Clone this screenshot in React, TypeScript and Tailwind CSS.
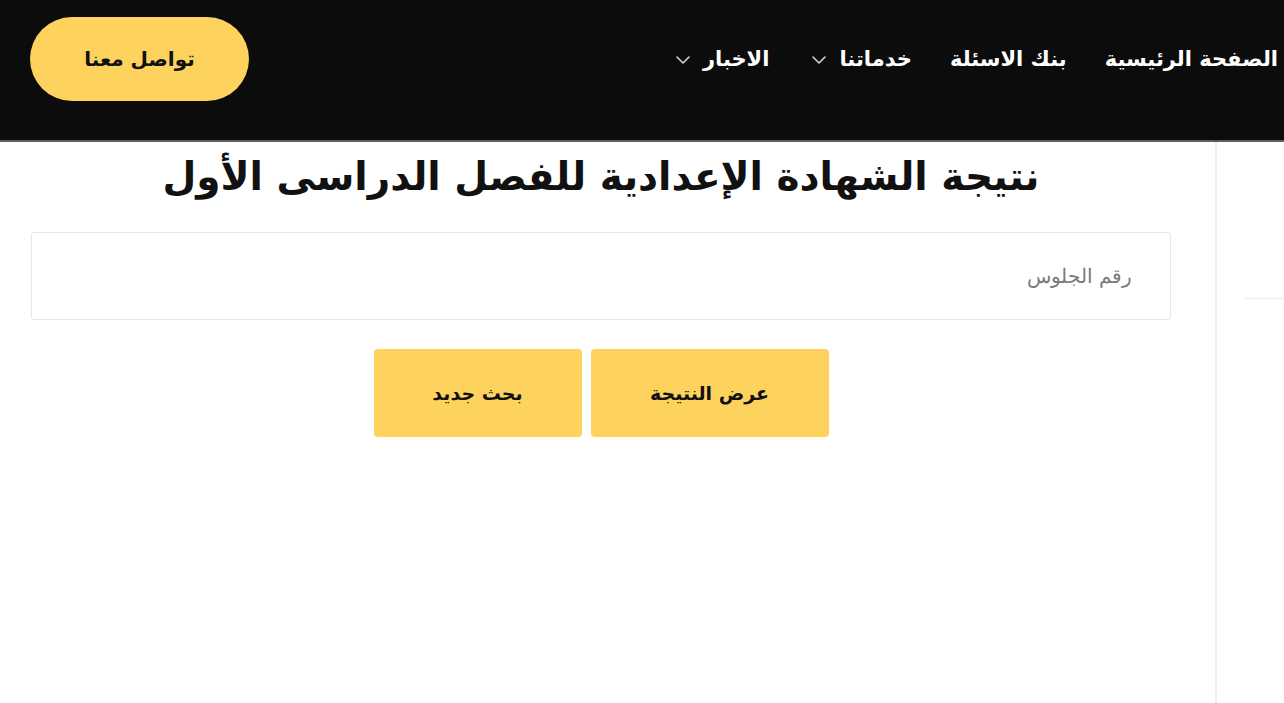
import { ChevronDown } from 'lucide-react';

const navItems = [
  { label: 'الصفحة الرئيسية', dropdown: false },
  { label: 'بنك الاسئلة', dropdown: false },
  { label: 'خدماتنا', dropdown: true },
  { label: 'الاخبار', dropdown: true },
];

export default function App() {
  return (
    <div dir="rtl" className="min-h-[703px] bg-white font-['DejaVu_Sans',sans-serif] text-[#111]">
      {/* Header */}
      <header className="h-[142px] bg-[#0c0c0c] border-b-2 border-[#5f5f5f] flex items-center justify-between pr-[6px] pl-[30px]">
        <nav className="flex items-center gap-[38px] -mt-[20px]">
          {navItems.map((item) => (
            <a key={item.label} href="#" className="flex items-center gap-[8px] text-[21px] font-bold text-white">
              <span>{item.label}</span>
              {item.dropdown && <ChevronDown className="w-[24px] h-[24px] text-[#d4d4d4]" strokeWidth={1.6} />}
            </a>
          ))}
        </nav>
        <button className="w-[219px] h-[84px] -mt-[22px] rounded-full bg-[#fdd35d] text-[20px] font-bold text-[#111]">
          تواصل معنا
        </button>
      </header>

      {/* Body */}
      <div className="flex min-h-[561px]">
        <aside className="w-[69px] shrink-0 border-l-2 border-[#ececec]">
          <div className="mt-[156px] h-px w-[40px] bg-[#eeeeee] ml-0" />
        </aside>
        <main className="flex-1 pt-[8px]">
          <div className="w-[1140px] mr-[44px]">
            <h1 className="text-center text-[39px] font-bold leading-[54px] text-[#111]">
              نتيجة الشهادة الإعدادية للفصل الدراسى الأول
            </h1>
            <input
              type="text"
              placeholder="رقم الجلوس"
              className="mt-[28px] block w-full h-[88px] rounded-[3px] border border-[#e6e6e6] bg-white px-[38px] text-[20px] font-light text-[#333] placeholder:text-[#7a7a7a] outline-none"
            />
            <div className="mt-[29px] flex justify-center gap-[9px]">
              <button className="w-[238px] h-[88px] rounded-[4px] bg-[#fdd35d] text-[19px] font-bold text-[#111]">
                عرض النتيجة
              </button>
              <button className="w-[208px] h-[88px] rounded-[4px] bg-[#fdd35d] text-[19px] font-bold text-[#111]">
                بحث جديد
              </button>
            </div>
          </div>
        </main>
      </div>
    </div>
  );
}
